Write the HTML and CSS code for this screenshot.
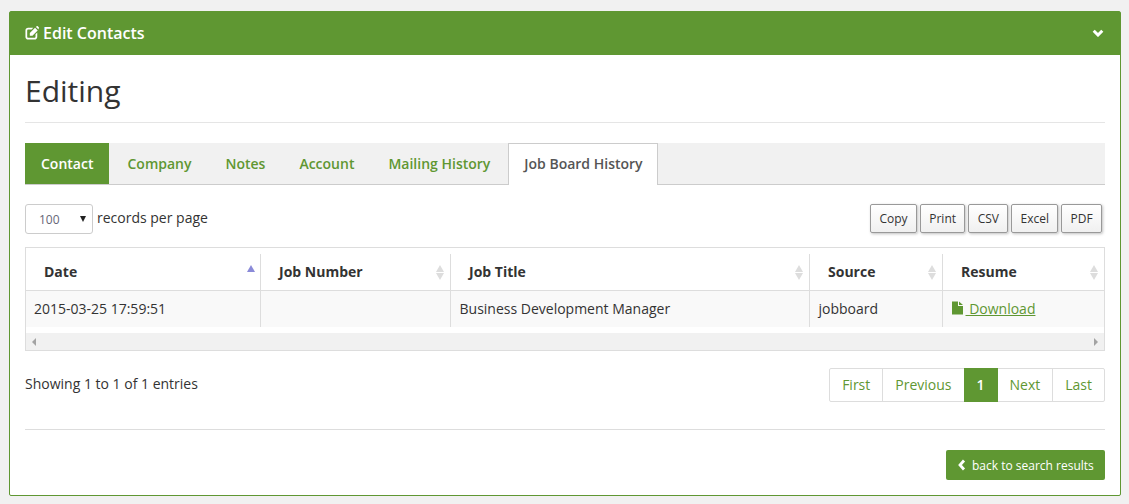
FILE: index.html
```html
<!DOCTYPE html>
<html lang="en">
<head>
<meta charset="utf-8">
<title>Edit Contacts</title>
<link rel="stylesheet" href="styles.css">
</head>
<body>
<section class="panel">
  <header class="panel-head">
    <h2 class="panel-title">
      <svg class="icon-edit" viewBox="0 0 16 16" width="14" height="14"><path d="M3.500 2H9.500L7.500 4H3.800C3.100 4 2.500 4.600 2.500 5.300V12.200C2.500 12.900 3.100 13.500 3.800 13.500H10.700C11.400 13.500 12 12.900 12 12.200V9.500L14 7.500V12.500C14 14.200 12.700 15.500 11 15.500H3.500C1.800 15.500 .5 14.200 .5 12.500V5C.5 3.300 1.800 2 3.500 2Z" fill="#fff"/><path d="M5.500 8L11.500 2L14.500 5L8.500 11H5.500ZM12.500 1L13.300.3C13.700-.1 14.200-.1 14.600.3L15.700 1.400C16.100 1.800 16.100 2.300 15.700 2.700L15.500 4Z" fill="#fff"/></svg>
      Edit Contacts
    </h2>
    <svg class="icon-chevron" viewBox="0 0 12 8" width="12" height="8"><path d="M1.700 1.800L6 6L10.300 1.800" fill="none" stroke="#fff" stroke-width="3" stroke-linejoin="miter"/></svg>
  </header>
  <div class="panel-body">
    <h1 class="page-title">Editing</h1>
    <nav class="tabs">
      <a class="tab tab-primary">Contact</a>
      <a class="tab">Company</a>
      <a class="tab">Notes</a>
      <a class="tab">Account</a>
      <a class="tab">Mailing History</a>
      <a class="tab tab-active">Job Board History</a>
    </nav>
    <div class="toolbar">
      <div class="length">
        <span class="select"><span>100</span><i class="select-arrow"></i></span>
        <span class="length-label">records per page</span>
      </div>
      <div class="export">
        <button class="export-btn">Copy</button>
        <button class="export-btn">Print</button>
        <button class="export-btn">CSV</button>
        <button class="export-btn">Excel</button>
        <button class="export-btn">PDF</button>
      </div>
    </div>
    <div class="table-wrap">
      <table class="grid">
        <colgroup>
          <col class="col-date"><col class="col-num"><col class="col-title"><col class="col-source"><col class="col-resume">
        </colgroup>
        <thead>
          <tr>
            <th class="sorted-cell">Date<i class="sort-on"></i></th>
            <th>Job Number<i class="sort"></i></th>
            <th>Job Title<i class="sort"></i></th>
            <th>Source<i class="sort"></i></th>
            <th>Resume<i class="sort sort-last"></i></th>
          </tr>
        </thead>
        <tbody>
          <tr>
            <td>2015-03-25 17:59:51</td>
            <td></td>
            <td>Business Development Manager</td>
            <td>jobboard</td>
            <td class="cell-file"><a class="download"><svg class="icon-file" viewBox="0 0 11 14" width="11" height="14"><path d="M0 .5H6V5H11V13.500H0ZM7 .5L11 4H7Z" fill="#5f9732"/></svg> Download</a></td>
          </tr>
        </tbody>
      </table>
      <div class="scrollbar">
        <i class="scroll-left"></i>
        <i class="scroll-right"></i>
      </div>
    </div>
    <div class="footer-row">
      <div class="info">Showing 1 to 1 of 1 entries</div>
      <div class="pager">
        <a class="page">First</a>
        <a class="page">Previous</a>
        <a class="page page-current">1</a>
        <a class="page">Next</a>
        <a class="page">Last</a>
      </div>
    </div>
    <div class="actions">
      <a class="back-btn"><svg viewBox="0 0 8 12" width="8" height="12"><path d="M6 1.500L2 6L6 10.500" fill="none" stroke="#fff" stroke-width="2.800" stroke-linejoin="miter"/></svg> back to search results</a>
    </div>
  </div>
</section>
</body>
</html>
```
FILE: styles.css
```css
* { box-sizing: border-box; }
html, body { margin: 0; padding: 0; }
body {
  height: 504px;
  overflow: hidden;
  background: #f1f1f1;
  font-family: "Open Sans", sans-serif;
  font-size: 14px;
  color: #333;
  padding: 11px 8px 0 9px;
}
.panel {
  height: 485px;
  background: #fff;
  border: 1px solid #5f9732;
  border-radius: 2px;
}
.panel-head {
  height: 43px;
  background: #5f9732;
  display: flex;
  align-items: center;
  justify-content: space-between;
  padding: 0 16px 2px 15px;
  color: #fff;
}
.panel-title {
  margin: 0;
  font-size: 16px;
  font-weight: 600;
  line-height: 20px;
  display: flex;
  align-items: center;
  gap: 4px;
}
.panel-body { padding: 0 15px; }
.page-title {
  margin: 0;
  height: 68px;
  padding-top: 15px;
  border-bottom: 1px solid #e5e5e5;
  font-size: 30px;
  font-weight: 400;
  line-height: 42px;
  color: #333;
}
.tabs {
  margin-top: 20px;
  height: 42px;
  display: flex;
  background: #f1f1f1;
  border-bottom: 1px solid #ccc;
}
.tab {
  padding: 0 17px;
  height: 41px;
  line-height: 41px;
  font-weight: 600;
  color: #5f9732;
}
.tab-primary { background: #5f9732; color: #fff; padding: 0 16px; margin-right: 1px; }
.tab-active {
  height: 42px;
  margin-left: 1px;
  background: #fff;
  border: 1px solid #ccc;
  border-bottom: 0;
  color: #555;
  padding: 0 14px 0 15px;
  line-height: 39px;
}
.toolbar {
  margin-top: 19px;
  height: 30px;
  display: flex;
  justify-content: space-between;
  align-items: flex-start;
}
.length { display: flex; align-items: center; gap: 4px; height: 30px; }
.length-label { padding-bottom: 3px; }
.select {
  width: 68px;
  height: 30px;
  border: 1px solid #ccc;
  border-radius: 3px;
  display: flex;
  align-items: center;
  justify-content: space-between;
  padding: 0 6px 0 13px;
  font-size: 12px;
  color: #667;
}
.select-arrow {
  width: 0; height: 0;
  border-left: 3px solid transparent;
  border-right: 3px solid transparent;
  border-top: 6px solid #222;
}
.export { display: flex; gap: 3px; margin: 0 3px 0 0; }
.export-btn {
  height: 29px;
  padding: 0 8.300px;
  font-family: "Open Sans", sans-serif;
  font-size: 12px;
  color: #333;
  background: linear-gradient(#fff, #f0f0f0);
  border: 1px solid #999;
  border-radius: 2px;
  box-shadow: 1px 1px 3px rgba(0,0,0,.25);
}
.table-wrap {
  margin-top: 13px;
  height: 104px;
  border: 1px solid #ddd;
  overflow: hidden;
}
.grid {
  width: 1079px;
  table-layout: fixed;
  border-collapse: collapse;
}
.col-date { width: 234px; }
.col-num { width: 190px; }
.col-title { width: 359px; }
.col-source { width: 133px; }
.col-resume { width: 163px; }
.grid th {
  position: relative;
  height: 42px;
  padding: 5px 18px 0 19px;
  text-align: left;
  font-weight: 700;
  font-size: 14px;
  color: #333;
  border-bottom: 1px solid #ddd;
}
.grid th:first-child { padding-left: 18px; }
.grid th + th::before {
  content: "";
  position: absolute;
  left: 0; top: 6px; bottom: 0;
  border-left: 1px solid #ddd;
}
.grid td {
  height: 37px;
  padding: 0 9px;
  background: #f9f9f9;
  border-left: 1px solid #ddd;
  color: #333;
}
.grid td:first-child { border-left: 0; padding-left: 8px; }
.grid .cell-file { padding-left: 9px; }
.sort, .sort-on {
  position: absolute;
  right: 6px;
  width: 0; height: 0;
}
.sort {
  top: 17px;
  border-left: 4.500px solid transparent;
  border-right: 4.500px solid transparent;
  border-bottom: 7px solid #ddd;
}
.sort::after {
  content: "";
  position: absolute;
  left: -4.500px; top: 8px;
  width: 0; height: 0;
  border-left: 4.500px solid transparent;
  border-right: 4.500px solid transparent;
  border-top: 7px solid #ddd;
}
.sort-last { right: 7px; }
.sort-on {
  top: 17px;
  right: 5px;
  border-left: 4.500px solid transparent;
  border-right: 4.500px solid transparent;
  border-bottom: 7px solid #8a8ad8;
}
.download { color: #5f9732; text-decoration: underline; white-space: nowrap; }
.icon-file { vertical-align: -1px; margin-right: 3px; }
.scrollbar {
  margin-top: 6px;
  height: 17px;
  background: #f1f1f1;
  display: flex;
  justify-content: space-between;
  align-items: center;
  padding: 0 6px;
}
.scroll-left {
  width: 0; height: 0;
  border-top: 4px solid transparent;
  border-bottom: 4px solid transparent;
  border-right: 4px solid #a3a3a3;
}
.scroll-right {
  width: 0; height: 0;
  border-top: 4px solid transparent;
  border-bottom: 4px solid transparent;
  border-left: 4px solid #a3a3a3;
}
.footer-row {
  margin-top: 17px;
  height: 62px;
  display: flex;
  justify-content: space-between;
  align-items: flex-start;
  border-bottom: 1px solid #ddd;
}
.info { line-height: 32px; color: #333; }
.pager {
  display: flex;
  height: 34px;
  border: 1px solid #ddd;
  border-radius: 2px;
}
.page {
  height: 32px;
  line-height: 32px;
  padding: 0 12px;
  color: #5f9732;
  border-left: 1px solid #ddd;
}
.page:first-child { border-left: 0; }
.page-current {
  margin: -1px 0;
  height: 34px;
  line-height: 34px;
  background: #5f9732;
  color: #fff;
  font-weight: 600;
  border-left: 0;
  padding: 0 13px;
}
.page-current + .page { border-left: 0; }
.actions {
  margin-top: 20px;
  display: flex;
  justify-content: flex-end;
}
.back-btn {
  width: 159px;
  height: 30px;
  display: flex;
  align-items: center;
  gap: 6px;
  padding: 0 0 0 12px;
  background: #5f9732;
  color: #fff;
  border-radius: 2px;
  font-size: 12px;
  font-weight: 400;
}
```
